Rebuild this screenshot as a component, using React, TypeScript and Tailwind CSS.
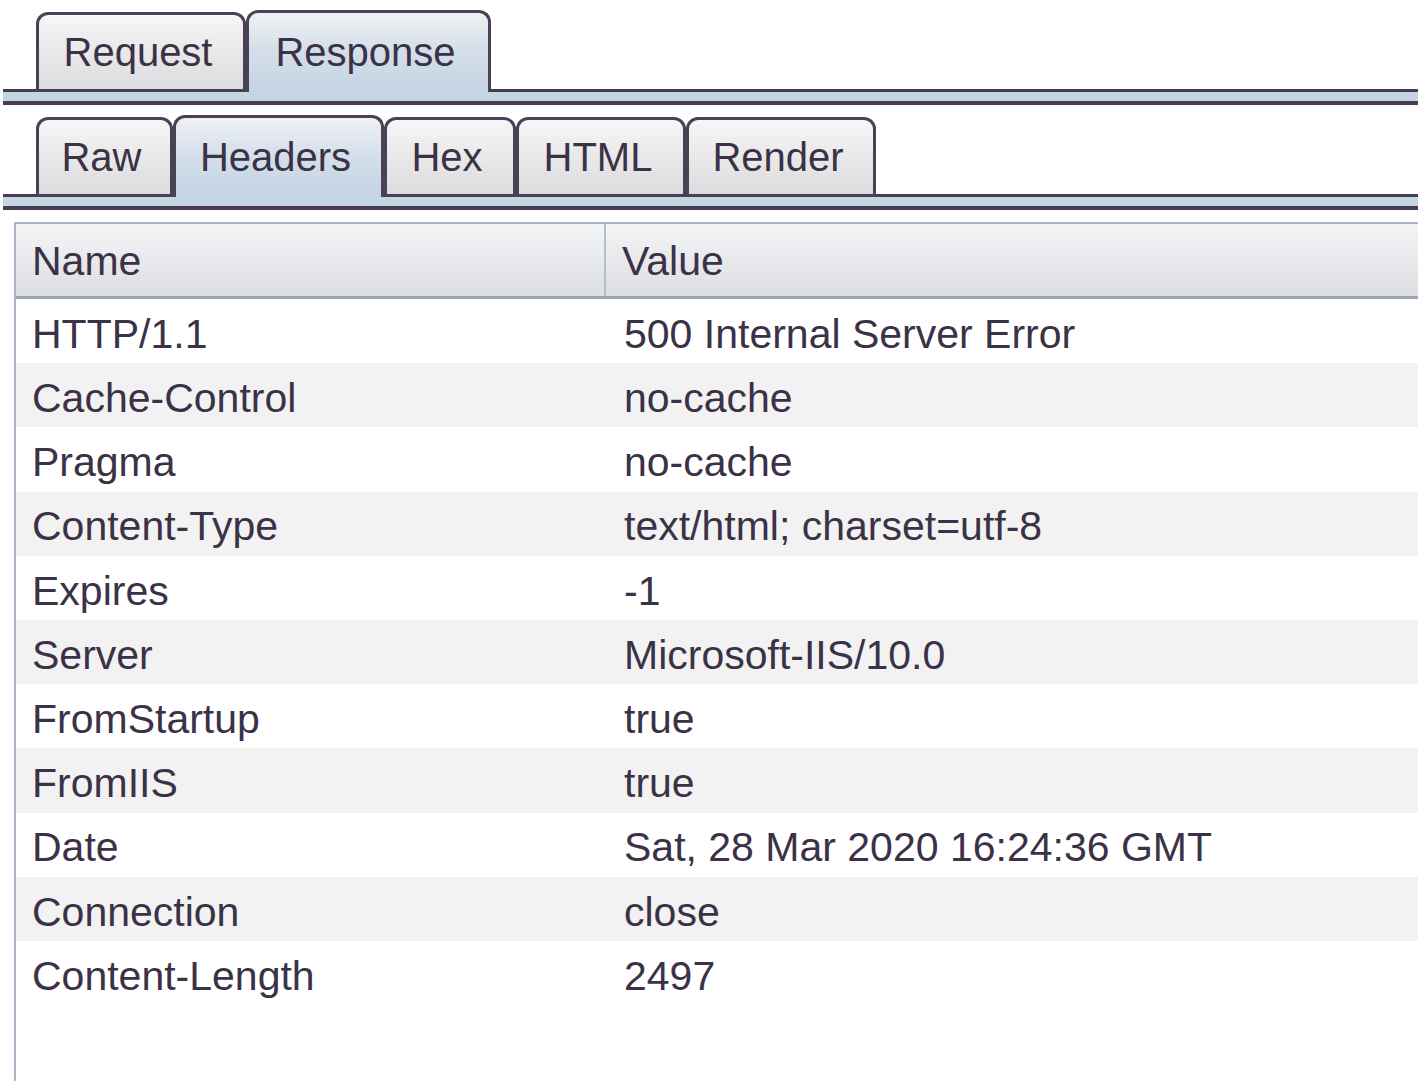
const headers: [string, string][] = [
  ["HTTP/1.1", "500 Internal Server Error"],
  ["Cache-Control", "no-cache"],
  ["Pragma", "no-cache"],
  ["Content-Type", "text/html; charset=utf-8"],
  ["Expires", "-1"],
  ["Server", "Microsoft-IIS/10.0"],
  ["FromStartup", "true"],
  ["FromIIS", "true"],
  ["Date", "Sat, 28 Mar 2020 16:24:36 GMT"],
  ["Connection", "close"],
  ["Content-Length", "2497"],
];

type TabProps = { label: string; width: string; selected?: boolean };

const Tab = ({ label, width, selected }: TabProps) => {
  if (selected) {
    return (
      <div
        className={`${width} h-full shrink-0 rounded-t-[12px] border-[3px] border-b-0 border-[#4a4157] bg-gradient-to-b from-[#eef1f4] via-[#d3dee9] to-[#c4d4e4] flex items-center justify-center pb-[2px] pr-[6px]`}
      >
        <span>{label}</span>
      </div>
    );
  }
  return (
    <div
      className={`${width} h-[calc(100%-2px)] shrink-0 rounded-t-[12px] border-[3px] border-[#4a4157] bg-gradient-to-b from-[#f6f6f6] to-[#dcdcde] flex items-center justify-center pr-[6px]`}
    >
      <span>{label}</span>
    </div>
  );
};

const Separator = () => (
  <div className="ml-[3px]">
    <div className="h-[9px] bg-[#c6d5e4]"></div>
    <div className="h-[4px] bg-[#463d52]"></div>
  </div>
);

const App = () => {
  return (
    <div
      className="w-[1418px] h-[1081px] bg-white overflow-hidden text-[#3b3247]"
      style={{ fontFamily: '"Liberation Sans", Arial, sans-serif' }}
    >
      {/* Request / Response tabs */}
      <div className="h-[92px] pt-[10px] flex items-end text-[40px]">
        <div className="w-[33px] ml-[3px] shrink-0 border-b-[3px] border-[#463d52]"></div>
        <Tab label="Request" width="w-[210px]" />
        <Tab label="Response" width="w-[245px]" selected />
        <div className="flex-1 border-b-[3px] border-[#463d52]"></div>
      </div>
      <Separator />

      {/* Raw / Headers / Hex / HTML / Render tabs */}
      <div className="h-[92px] pt-[10px] flex items-end text-[40px]">
        <div className="w-[33px] ml-[3px] shrink-0 border-b-[3px] border-[#463d52]"></div>
        <Tab label="Raw" width="w-[137px]" />
        <Tab label="Headers" width="w-[211px]" selected />
        <Tab label="Hex" width="w-[132px]" />
        <Tab label="HTML" width="w-[170px]" />
        <Tab label="Render" width="w-[190px]" />
        <div className="flex-1 border-b-[3px] border-[#463d52]"></div>
      </div>
      <Separator />

      {/* Headers table */}
      <div className="mt-[12px] ml-[14px] h-full border-l-[2px] border-t-[2px] border-[#a9b7c9] text-[41px]">
        <div className="h-[75px] flex border-b-[3px] border-[#9ca6b4] bg-gradient-to-b from-[#f4f5f7] to-[#dcdee2]">
          <div className="w-[590px] shrink-0 pl-[16px] pt-[4px] flex items-center border-r-[2px] border-[#b2bfcf]">
            Name
          </div>
          <div className="flex-1 pl-[16px] pt-[4px] flex items-center">Value</div>
        </div>
        {headers.map(([name, value], i) => (
          <div
            key={name}
            className={`h-[64.2px] pt-[7px] flex items-center ${i % 2 === 1 ? "bg-[#f2f2f2]" : "bg-white"}`}
          >
            <div className="w-[592px] shrink-0 pl-[16px]">{name}</div>
            <div className="flex-1 pl-[16px]">{value}</div>
          </div>
        ))}
      </div>
    </div>
  );
};

export default App;
